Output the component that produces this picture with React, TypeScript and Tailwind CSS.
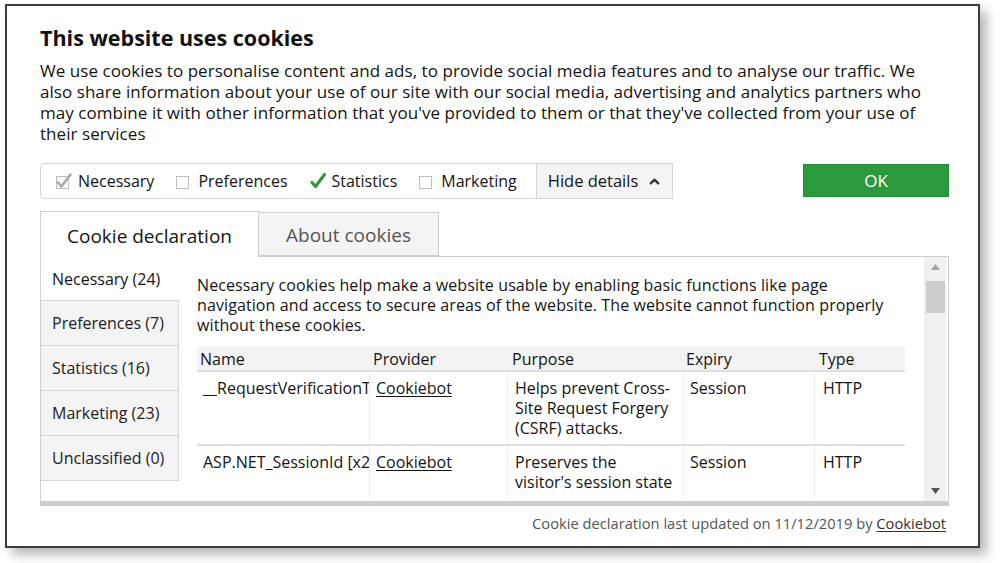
import { ChevronUp } from 'lucide-react'

const font = { fontFamily: '"Open Sans", "Noto Sans", sans-serif' }

function Box({ checked, tone }: { checked?: boolean; tone?: 'gray' | 'green' }) {
  return (
    <svg width="18" height="18" viewBox="0 0 18 18" className="shrink-0">
      <rect x="1.5" y="4.5" width="12" height="12" fill="#fff" stroke={tone === 'green' ? '#fff' : '#bdbdbd'} />
      {checked && (
        <path
          d="M3 10.5 L6.5 14.5 L15.5 2.5"
          fill="none"
          stroke={tone === 'green' ? '#2e9a3c' : '#a9a9a9'}
          strokeWidth={tone === 'green' ? 3.2 : 2.6}
          strokeLinecap="round"
          strokeLinejoin="round"
        />
      )}
    </svg>
  )
}

function Option({ label, checked, tone }: { label: string; checked?: boolean; tone?: 'gray' | 'green' }) {
  return (
    <label className="flex items-center gap-[5px] text-[16px] text-[#141414]">
      <Box checked={checked} tone={tone} />
      <span>{label}</span>
    </label>
  )
}

const sideTabs = ['Necessary (24)', 'Preferences (7)', 'Statistics (16)', 'Marketing (23)', 'Unclassified (0)']

const rows = [
  {
    name: '__RequestVerificationToken',
    provider: 'Cookiebot',
    purpose: 'Helps prevent Cross-Site Request Forgery (CSRF) attacks.',
    expiry: 'Session',
    type: 'HTTP',
  },
  {
    name: 'ASP.NET_SessionId [x2]',
    provider: 'Cookiebot',
    purpose: "Preserves the visitor's session state across page requests.",
    expiry: 'Session',
    type: 'HTTP',
  },
]

export default function App() {
  return (
    <div className="w-[1000px] h-[563px] bg-white pt-[4px] pl-[5px] overflow-hidden" style={font}>
      <div className="w-[975px] h-[544px] border-2 border-[#3c3c3c] bg-white shadow-[7px_7px_10px_rgba(0,0,0,0.28)] pt-[20px] pl-[33px] pr-[29px] text-[#141414] overflow-hidden">
        <h1 className="text-[21.5px] leading-[24px] font-bold text-[#111]">This website uses cookies</h1>
        <p className="mt-[10px] text-[17px] tracking-[0.05px] leading-[21px] text-[#141414]">
          We use cookies to personalise content and ads, to provide social media features and to analyse our traffic. We also share information about your use of our site with our social media, advertising and analytics partners who may combine it with other information that you've provided to them or that they've collected from your use of their services
        </p>

        <div className="mt-[19px] flex items-start justify-between">
          <div className="flex h-[36px]">
            <div className="flex items-center gap-[21px] border border-r-0 border-[#d6d6d6] rounded-l-[5px] pl-[14px] pr-[19px]">
              <Option label="Necessary" checked tone="gray" />
              <Option label="Preferences" />
              <Option label="Statistics" checked tone="green" />
              <Option label="Marketing" />
            </div>
            <button className="flex items-center gap-[9px] border border-[#d6d6d6] bg-[#f4f4f6] pl-[11px] pr-[10px] text-[16.5px] text-[#141414]">
              Hide details
              <ChevronUp size={15} strokeWidth={3.5} className="text-[#333]" />
            </button>
          </div>
          <button className="mt-[1px] w-[146px] h-[33px] bg-[#2b9a3d] border border-[#239033] text-white text-[17px]">OK</button>
        </div>

        <div className="mt-[11px] flex items-end h-[46px]">
          <div className="relative z-10 -mb-px h-[46px] w-[219px] border border-b-0 border-[#cfcfcf] bg-white flex items-center justify-center pt-[3px] text-[19px] text-[#141414]">
            Cookie declaration
          </div>
          <div className="h-[44px] w-[180px] border border-l-0 border-[#cfcfcf] bg-[#f4f4f4] flex items-center justify-center pt-[2px] text-[19px] text-[#555]">
            About cookies
          </div>
        </div>

        <div className="h-[250px] border border-[#cfcfcf] border-b-[5px] border-b-[#cdcdcd] flex">
          <div className="w-[138px] shrink-0 flex flex-col">
            {sideTabs.map((t, i) => (
              <div
                key={t}
                className={
                  i === 0
                    ? 'h-[44px] bg-white flex items-center pl-[11px] text-[16px] text-[#141414] border-b border-[#d6d6d6]'
                    : 'h-[45px] bg-[#f4f4f4] flex items-center pl-[11px] text-[16px] text-[#222] border-b border-r border-[#d6d6d6]'
                }
              >
                {t}
              </div>
            ))}
          </div>

          <div className="flex-1">
            <div className="h-[240px] overflow-hidden pl-[18px] pr-[18px] pt-[18px]">
              <p className="text-[16px] tracking-[0.1px] leading-[20px] text-[#141414]">
                Necessary cookies help make a website usable by enabling basic functions like page navigation and access to secure areas of the website. The website cannot function properly without these cookies.
              </p>
              <div className="mt-[12px] w-[708px]">
                <div className="grid grid-cols-[173px_138px_176px_131px_90px] h-[25px] bg-[#f3f3f3] border-b-2 border-[#dedede] text-[16px] leading-[24px] text-[#141414]">
                  <div className="pl-[3px]">Name</div>
                  <div className="pl-[3px]">Provider</div>
                  <div className="pl-[4px]">Purpose</div>
                  <div className="pl-[2px]">Expiry</div>
                  <div className="pl-[4px]">Type</div>
                </div>
                {rows.map((r, i) => (
                  <div
                    key={r.name}
                    className={`grid grid-cols-[173px_138px_176px_131px_90px] h-[74px] text-[16px] leading-[20px] text-[#141414] ${i === 0 ? 'border-b-2 border-[#dedede]' : ''}`}
                  >
                    <div className="pl-[6px] pt-[6px] whitespace-nowrap overflow-hidden border-r border-[#ececec]">{r.name}</div>
                    <div className="pl-[6px] pt-[6px] border-r border-[#ececec]">
                      <span className="underline underline-offset-2">{r.provider}</span>
                    </div>
                    <div className="pl-[7px] pr-[6px] pt-[6px] border-r border-[#ececec]">{r.purpose}</div>
                    <div className="pl-[6px] pt-[6px] border-r border-[#ececec]">{r.expiry}</div>
                    <div className="pl-[8px] pt-[6px]">{r.type}</div>
                  </div>
                ))}
              </div>
            </div>
          </div>

          <div className="w-[22px] shrink-0 bg-[#f0f0f0] flex flex-col items-center mr-[2px]">
            <div className="h-[20px] w-full flex items-center justify-center">
              <svg width="9" height="6" viewBox="0 0 9 6"><path d="M0 6 L4.5 0 L9 6 Z" fill="#a3a3a3" /></svg>
            </div>
            <div className="mt-[4px] h-[32px] w-[19px] bg-[#cdcdcd]" />
            <div className="flex-1" />
            <div className="h-[20px] w-full flex items-center justify-center">
              <svg width="9" height="6" viewBox="0 0 9 6"><path d="M0 0 L9 0 L4.5 6 Z" fill="#555" /></svg>
            </div>
          </div>
        </div>

        <p className="mt-[6px] text-right pr-[3px] text-[14.7px] text-[#555]">
          Cookie declaration last updated on 11/12/2019 by <span className="underline underline-offset-2 text-[#333]">Cookiebot</span>
        </p>
      </div>
    </div>
  )
}
